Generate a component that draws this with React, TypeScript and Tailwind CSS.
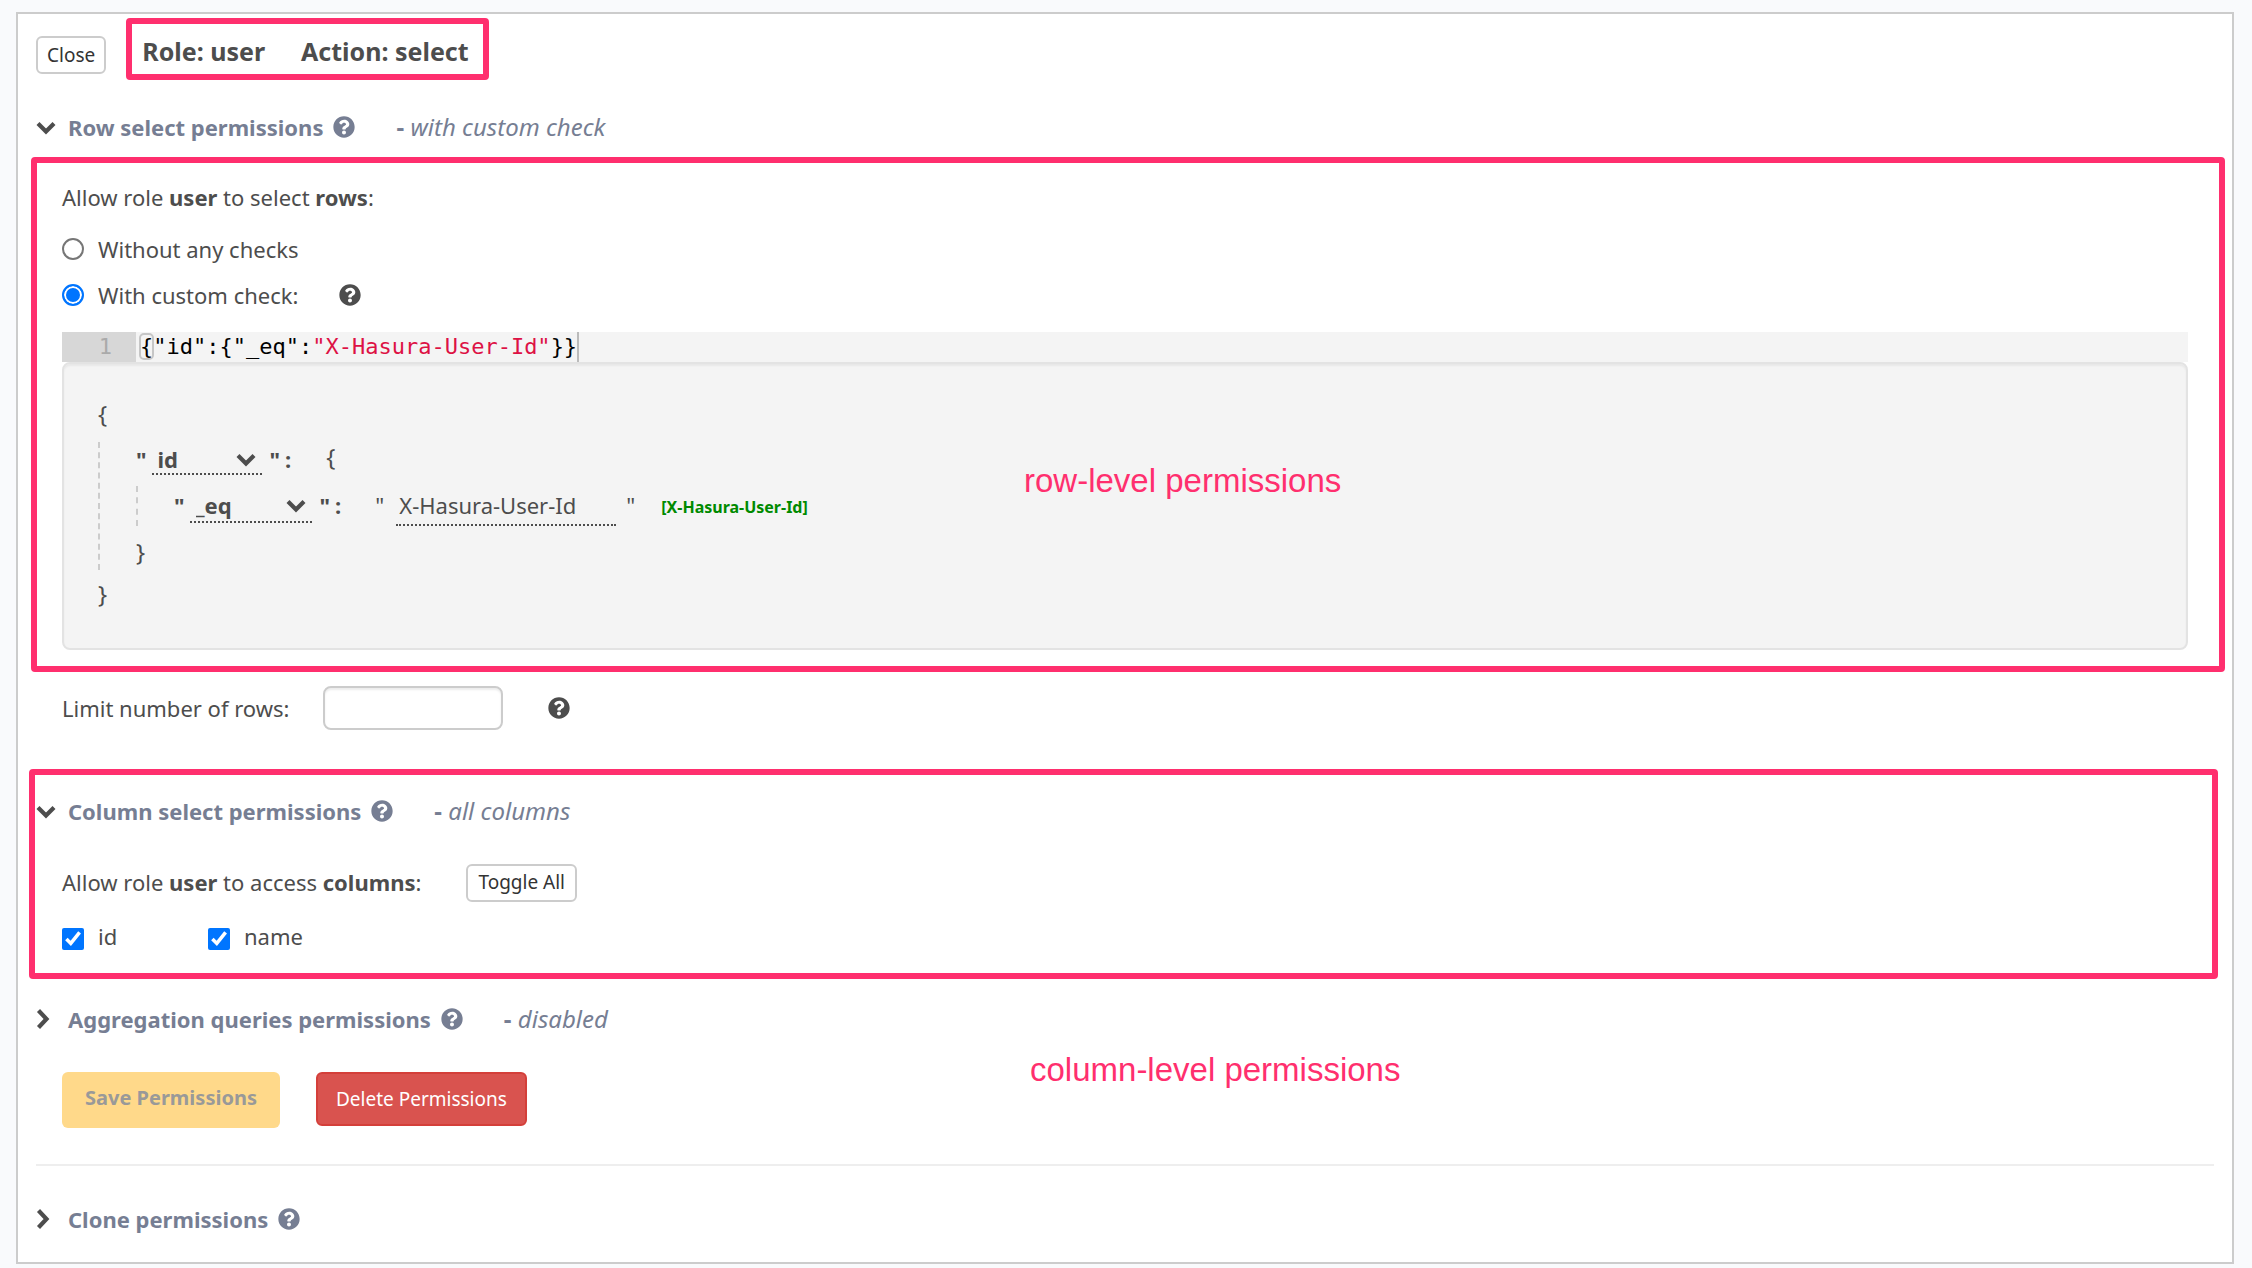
import { type ReactNode } from "react";
import { FaQuestionCircle } from "react-icons/fa";

const PINK_NOTE =
  "pointer-events-none absolute whitespace-nowrap font-['Liberation_Sans',sans-serif] text-[33px] leading-10 text-[#ff2f6e]";

const RADIO =
  "size-[22px] appearance-none rounded-full border-2 border-[#767676] bg-white checked:border-[#0075ff] checked:bg-[#0075ff] checked:shadow-[inset_0_0_0_2px_white]";

function Chevron({ open = false }: { open?: boolean }) {
  return (
    <svg
      viewBox="0 0 20 20"
      className="size-5 shrink-0 text-[#4d4d4d]"
      fill="none"
      stroke="currentColor"
      strokeWidth="4.2"
      aria-hidden="true"
    >
      <path d={open ? "M2 6.5 10 14.5 18 6.5" : "M2.5 1.5 10.5 10 2.5 18.5"} />
    </svg>
  );
}

function Help({ className = "text-[#4d4d4d]" }: { className?: string }) {
  return (
    <button type="button" aria-label="Help" className={className}>
      <FaQuestionCircle className="size-[22px]" />
    </button>
  );
}

function SectionHeading({ title, status, open = false }: { title: string; status?: string; open?: boolean }) {
  return (
    <div className="flex h-8 items-center text-[22px] leading-8 text-[#767e93]">
      <button type="button" aria-expanded={open} className="flex items-center gap-3 font-bold">
        <Chevron open={open} />
        {title}
      </button>
      <span className="ml-2.5 flex items-center">
        <Help className="text-[#767e93]" />
      </span>
      {status && (
        <span className="ml-[41px] text-2xl leading-8 italic">
          <b className="not-italic">-</b> {status}
        </span>
      )}
    </div>
  );
}

function Brace({ children, className = "" }: { children: string; className?: string }) {
  return <div className={`text-2xl leading-7 ${className}`}>{children}</div>;
}

function KeySelect({ value, label, width }: { value: string; label: string; width: string }) {
  return (
    <span className={`relative ml-[5px] mr-2 ${width}`}>
      <select
        aria-label={label}
        defaultValue={value}
        className="h-full w-full appearance-none border-b-2 border-dotted border-[#4d4d4d] bg-transparent pl-1.5 font-bold leading-8 outline-none"
      >
        <option>{value}</option>
      </select>
      <span className="pointer-events-none absolute right-1.5 top-1.5">
        <Chevron open />
      </span>
    </span>
  );
}

function SmallButton({ children, padding = "px-[9px]" }: { children: ReactNode; padding?: string }) {
  return (
    <button
      type="button"
      className={`h-[38px] rounded-md border-2 border-[#ccc] bg-white text-[19px] leading-8 text-[#333] ${padding}`}
    >
      {children}
    </button>
  );
}

function ColumnCheck({ name }: { name: string }) {
  return (
    <label className="flex w-[146px] items-center gap-3.5">
      <input type="checkbox" defaultChecked className="mt-1.5 size-[22px] accent-[#0075ff]" />
      {name}
    </label>
  );
}

export default function App() {
  return (
    <div className="bg-[#f9fafc] pt-3 pr-[18px] pb-1 pl-4 font-['Noto_Sans',sans-serif] text-[22px] leading-8 text-[#4d4d4d]">
      <main className="border-2 border-[#ccc] bg-white pb-[27px]">
        <header className="flex items-start gap-5 pt-1 pl-[18px]">
          <div className="mt-[18px] flex">
            <SmallButton>Close</SmallButton>
          </div>
          <h1 className="flex h-[62px] gap-9 rounded-sm border-6 border-[#ff2f6e] pt-[9px] pr-[14px] pl-2.5 text-[25px] leading-9 font-bold">
            <span>Role: user</span>
            <span>Action: select</span>
          </h1>
        </header>

        <div className="mt-[31px] pl-[18px]">
          <SectionHeading title="Row select permissions" status="with custom check" open />
        </div>

        <section className="mt-3.5 mr-[7px] ml-[13px] rounded-sm border-6 border-[#ff2f6e] pt-[18px] pr-[31px] pb-4 pl-[25px]">
          <p>
            Allow role <b>user</b> to select <b>rows</b>:
          </p>
          <label className="mt-5 flex w-fit items-center gap-3.5">
            <input type="radio" name="check" className={RADIO} />
            Without any checks
          </label>
          <div className="mt-3.5 flex items-center gap-[41px]">
            <label className="flex items-center gap-3.5">
              <input type="radio" name="check" defaultChecked className={RADIO} />
              With custom check:
            </label>
            <Help />
          </div>

          <div className="mt-[21px] flex h-[30px] bg-[#f4f4f4] font-['DejaVu_Sans_Mono',monospace] text-[22px] leading-[30px]">
            <span className="w-[74px] bg-[#d7d7d7] pr-6 text-right text-[#aaa]">1</span>
            <div
              role="textbox"
              aria-label="Custom check"
              contentEditable
              suppressContentEditableWarning
              className="flex-1 pl-1 text-black outline-none"
            >
              <span className="rounded-sm outline-2 -outline-offset-1 outline-[#c6c6c6]">{"{"}</span>
              <span>{'"id":{"_eq":'}</span>
              <span className="text-[#dd1144]">"X-Hasura-User-Id"</span>
              <span className="inline-block border-r-2 border-[#bbb]">{"}}"}</span>
            </div>
          </div>

          <div className="relative rounded-lg border-2 border-[#e3e3e3] bg-[#f4f4f4] pt-9 pb-10 pl-[34px] shadow-[inset_0_2px_2px_rgba(0,0,0,0.05)]">
            <Brace>{"{"}</Brace>
            <div className="mt-3.5 border-l-2 border-dashed border-[#ccc] pt-px pb-1 pl-9">
              <div className="flex h-8">
                <b>"</b>
                <KeySelect value="id" label="Column" width="w-[110px]" />
                <b>"</b>
                <b className="ml-[5px]">:</b>
                <Brace className="ml-[35px]">{"{"}</Brace>
              </div>
              <div className="mt-[11px] flex h-10 border-l-2 border-dashed border-[#ccc] pt-[3px] pb-[3px] pl-9">
                <b>"</b>
                <KeySelect value="_eq" label="Operator" width="w-[122px]" />
                <b>"</b>
                <b className="ml-[5px]">:</b>
                <span className="ml-[34px]">"</span>
                <input
                  type="text"
                  aria-label="Value"
                  defaultValue="X-Hasura-User-Id"
                  className="ml-3 h-[37px] w-[220px] border-b-2 border-dotted border-[#4d4d4d] bg-transparent px-[3px] pb-1 outline-none"
                />
                <span className="ml-2.5">"</span>
                <button type="button" className="ml-[26px] h-9 text-base leading-9 font-bold text-[#008a00]">
                  [X-Hasura-User-Id]
                </button>
              </div>
              <Brace className="mt-3">{"}"}</Brace>
            </div>
            <Brace className="mt-2.5">{"}"}</Brace>
            <span className={`${PINK_NOTE} top-[97px] left-[960px]`}>row-level permissions</span>
          </div>
        </section>

        <div className="mt-3.5 flex items-center pl-11">
          <label htmlFor="row-limit" className="w-[261px]">
            Limit number of rows:
          </label>
          <input
            id="row-limit"
            type="text"
            className="mr-[45px] h-11 w-[180px] rounded-lg border-2 border-[#ccc] bg-white px-3 shadow-[inset_0_2px_2px_rgba(0,0,0,0.075)] outline-none"
          />
          <Help />
        </div>

        <section className="mt-[39px] mr-3.5 ml-[11px] rounded-sm border-6 border-[#ff2f6e] pt-5 pb-[21px] pl-px">
          <SectionHeading title="Column select permissions" status="all columns" open />
          <div className="mt-[37px] flex items-start gap-[45px] pl-[26px]">
            <p className="leading-9">
              Allow role <b>user</b> to access <b>columns</b>:
            </p>
            <SmallButton padding="px-2.5 pb-0.5">Toggle All</SmallButton>
          </div>
          <div className="mt-[18px] flex pl-[26px]">
            <ColumnCheck name="id" />
            <ColumnCheck name="name" />
          </div>
        </section>

        <div className="mt-6 pl-[18px]">
          <SectionHeading title="Aggregation queries permissions" status="disabled" />
        </div>

        <div className="relative mt-[37px] flex items-start gap-9 pl-11">
          <button
            type="button"
            disabled
            className="h-14 rounded-md bg-[#ffd98a] px-[23px] pb-1 text-xl font-bold text-[#999]"
          >
            Save Permissions
          </button>
          <button
            type="button"
            className="h-[54px] rounded-md border-2 border-[#d43f3a] bg-[#d9534f] px-[18px] text-[19px] text-white"
          >
            Delete Permissions
          </button>
          <span className={`${PINK_NOTE} -top-[22px] left-[1012px]`}>column-level permissions</span>
        </div>

        <hr className="mt-9 mr-[18px] ml-[18px] border-t-2 border-[#eee]" />

        <div className="mt-[37px] pl-[18px]">
          <SectionHeading title="Clone permissions" />
        </div>
      </main>
    </div>
  );
}
